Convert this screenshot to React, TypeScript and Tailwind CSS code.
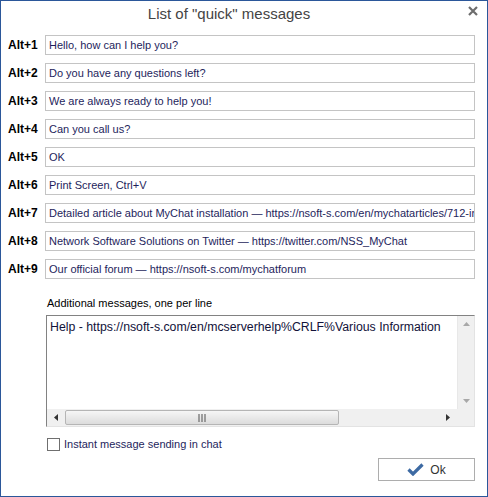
const quick = [
  'Hello, how can I help you?',
  'Do you have any questions left?',
  'We are always ready to help you!',
  'Can you call us?',
  'OK',
  'Print Screen, Ctrl+V',
  'Detailed article about MyChat installation \u2014 https://nsoft-s.com/en/mychatarticles/712-installing-mychat',
  'Network Software Solutions on Twitter \u2014 https://twitter.com/NSS_MyChat',
  'Our official forum \u2014 https://nsoft-s.com/mychatforum',
]

export default function App() {
  return (
    <div className="w-[488px] h-[497px] bg-white border border-[#2b579a] flex flex-col font-['Liberation_Sans',Arial,sans-serif] overflow-hidden">
      {/* title */}
      <div className="h-[34px] relative flex items-start justify-center pt-[3px] pr-[30px]">
        <span className="text-[15px] text-[#444444] leading-[20px]">
          List of "quick" messages
        </span>
        <span className="absolute right-[9px] top-[5px] text-[#6d6d6d]">
          <svg width="10" height="10" viewBox="0 0 10 10">
            <path d="M1 1 L9 9 M9 1 L1 9" stroke="#6d6d6d" strokeWidth="2.2" />
          </svg>
        </span>
      </div>

      {/* rows */}
      <div className="flex flex-col gap-[8px] pl-[7px] pr-[12px]">
        {quick.map((q, i) => (
          <div key={i} className="flex items-center h-[20px]">
            <div className="w-[37px] text-[12px] font-bold text-black leading-none">Alt+{i + 1}</div>
            <div className="flex-1 h-[20px] border border-[#c4c4c4] px-[3px] flex items-center overflow-hidden">
              <span className="text-[11px] text-[#1e1e5c] whitespace-nowrap leading-none">{q}</span>
            </div>
          </div>
        ))}
      </div>

      <div className="pl-[45px] pr-[12px]">
        <div className="mt-[18px] text-[11px] text-black leading-[13px] pl-[1px]">Additional messages, one per line</div>

        {/* memo */}
        <div className="mt-[5px] h-[112px] border-t border-l border-[#828282] border-r border-r-[#e3e3e3] border-b border-b-[#e3e3e3] flex flex-col">
          <div className="flex flex-1 min-h-0">
            <div className="flex-1 pl-[3px] pt-[4px] overflow-hidden">
              <div className="text-[12.3px] text-[#12123a] whitespace-nowrap leading-[14px]">
                Help - https://nsoft-s.com/en/mcserverhelp%CRLF%Various Information
              </div>
            </div>
            <div className="w-[17px] bg-[#f0f0f0] border-l border-[#e8e8e8] flex flex-col items-center justify-between py-[6px]">
              <svg width="7" height="4" viewBox="0 0 7 4"><path d="M0 4 L3.5 0 L7 4Z" fill="#a8a8a8" /></svg>
              <svg width="7" height="4" viewBox="0 0 7 4"><path d="M0 0 L3.5 4 L7 0Z" fill="#a8a8a8" /></svg>
            </div>
          </div>
          <div className="h-[17px] flex">
            <div className="flex-1 bg-[#f0f0f0] flex items-center">
              <div className="w-[18px] flex items-center justify-center">
                <svg width="4" height="7" viewBox="0 0 4 7"><path d="M4 0 L0 3.5 L4 7Z" fill="#333" /></svg>
              </div>
              <div className="w-[274px] h-[15px] rounded-[2px] border border-[#b5b5b5] bg-gradient-to-b from-[#f6f6f6] to-[#dcdcdc] flex items-center justify-center">
                <svg width="8" height="8" viewBox="0 0 8 8">
                  <path d="M1 0 V8 M4 0 V8 M7 0 V8" stroke="#6a6a6a" strokeWidth="1.2" />
                </svg>
              </div>
              <div className="flex-1" />
              <div className="w-[18px] flex items-center justify-center">
                <svg width="4" height="7" viewBox="0 0 4 7"><path d="M0 0 L4 3.5 L0 7Z" fill="#333" /></svg>
              </div>
            </div>
            <div className="w-[17px] bg-[#f0f0f0]" />
          </div>
        </div>

        {/* checkbox */}
        <div className="mt-[11px] flex items-center gap-[4px] pl-[1px]">
          <div className="w-[13px] h-[13px] border border-[#6f6f6f] bg-white" />
          <span className="text-[11px] text-[#1e1e5c] leading-[13px]">Instant message sending in chat</span>
        </div>

        <div className="mt-[7px] flex justify-end">
          <button className="w-[97px] h-[23px] border border-[#adadad] bg-white flex items-center justify-center gap-[6px]">
            <svg width="17" height="13" viewBox="0 0 17 13">
              <path d="M1.5 6.5 L6 11 L15.5 1.5" stroke="#3d6aa3" strokeWidth="3.2" fill="none" strokeLinejoin="miter" />
            </svg>
            <span className="text-[12px] text-[#333] leading-none">Ok</span>
          </button>
        </div>
      </div>
    </div>
  )
}
